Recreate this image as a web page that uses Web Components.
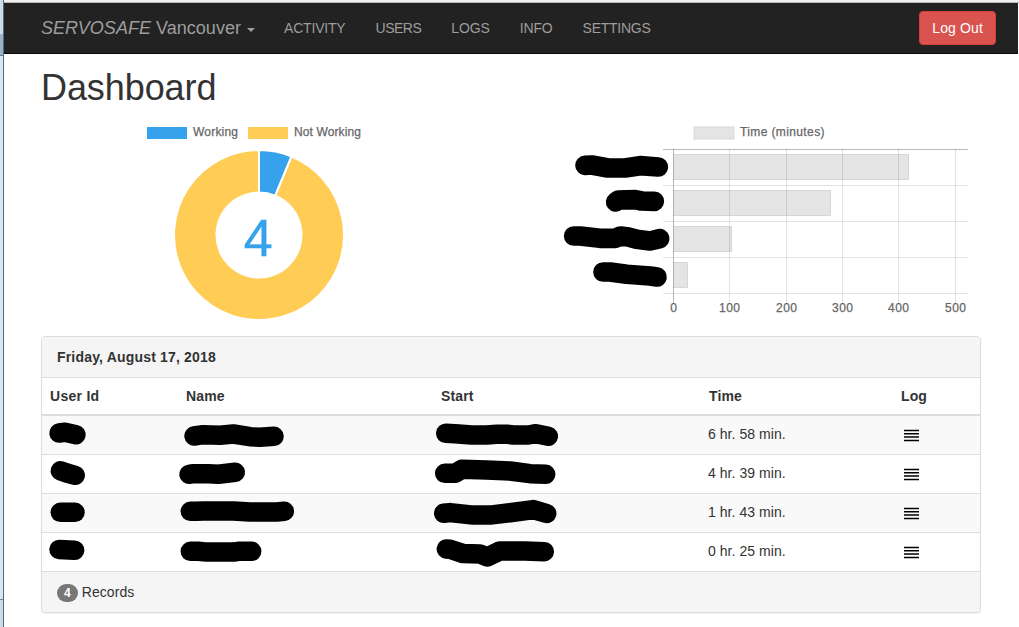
<!DOCTYPE html>
<html lang="en">
<head>
<meta charset="utf-8">
<title>Dashboard</title>
<style>
html,body{height:100%}
body{margin:0;background:#fff;color:#333;font:14px/20px "Liberation Sans",Arial,sans-serif;overflow:hidden}
</style>
</head>
<body>
<app-window>
  <nav-bar slot="nav">
    <nav-brand slot="brand"><i>SERVOSAFE</i> Vancouver</nav-brand>
    <nav-link style="letter-spacing:-.19px">ACTIVITY</nav-link><nav-link style="letter-spacing:-.5px">USERS</nav-link><nav-link style="letter-spacing:-.13px">LOGS</nav-link><nav-link style="letter-spacing:-.13px">INFO</nav-link><nav-link style="letter-spacing:-.25px">SETTINGS</nav-link>
    <danger-button slot="action">Log Out</danger-button>
  </nav-bar>
  <page-title>Dashboard</page-title>
  <chart-row><donut-chart></donut-chart><time-chart></time-chart></chart-row>
  <records-panel>
    <span slot="heading">Friday, August 17, 2018</span>
    <record-row head></record-row>
    <record-row time="6 hr. 58 min." a="17,17 23,16.3 34,18.7" b="16,20 25.3,18.7 42,19.3 55.3,18 72,20.7 82,21.3 96,20.3" c="12.7,17.3 22,17.7 38.7,19 53.7,19 63.7,18.3 75.3,18.3 80,19 95.3,19 103,17.7 115.3,20.3"></record-row>
    <record-row time="4 hr. 39 min." a="18.3,15.8 24.7,18 33.3,20.3" b="11,19.3 15.3,18.7 30.3,18.7 40.3,19.3 57.3,17.3" c="11.7,18.3 22,18.3 28.7,14.3 53.7,14.9 77,16 97,18.7 112.7,19.3"></record-row>
    <record-row time="1 hr. 43 min." a="18.3,18.3 33,18.3" b="12.3,17.3 18.7,17.3 25.3,16.9 55.3,16.9 72,18 98.7,18 106.3,17.3" c="10.7,19.3 17,18.6 40.3,21.1 57,21.1 77,18.7 100.3,15.6 113.7,19.5"></record-row>
    <record-row time="0 hr. 25 min." a="17,16.5 32.7,17.3" b="12.3,18.3 20.3,18.3 28.7,19.1 55.3,19.1 60.3,18.3 73.7,18.3" c="13.3,16 17,16.3 30.3,20.6 47,21 54.3,24 67,17.9 92,17.9 111.3,18.7"></record-row>
    <count-badge slot="footer">4</count-badge><span slot="footer">Records</span>
  </records-panel>
</app-window>
<script>
function define(name, html) {
  customElements.define(name, class extends HTMLElement {
    constructor() {
      super();
      this.attachShadow({mode: 'open'}).innerHTML = html;
    }
  });
}

define('app-window', `<style>
:host{display:grid;grid-template-columns:3px 1px 1014px 1px;grid-template-rows:3px 1fr;height:627px}
.edge{grid-row:1/3;background:linear-gradient(#d9d9d9 0 34px,#a4afbd 34px 55px,#74787e 55px 56px,#e3e3e3 56px 599px,#808080 599px 600px,#d8d8d8 600px)}
.line{grid-row:1/3;background:#2b74a6}
.top{grid-column:3/5;background:#f0f0f0;border-bottom:1px solid #b9b9b9;height:2px}
.body{grid-column:3;min-width:0}
.page{padding:14px 37px 0}
</style><div class="edge"></div><div class="line"></div><div class="top"></div>
<div class="body"><slot name="nav"></slot><div class="page"><slot></slot></div></div>`);

define('nav-bar', `<style>
:host{display:flex;align-items:center;height:50px;background:#222;border-bottom:1px solid #080808;color:#9d9d9d;padding:0 22px 0 37px}
.links{display:flex;flex:1;margin-left:14px}
</style><slot name="brand"></slot><div class="links"><slot></slot></div><slot name="action"></slot>`);

define('nav-brand', `<style>
:host{display:flex;align-items:center;font-size:18px;white-space:pre;letter-spacing:.03px}
.caret{border:4px solid transparent;border-top-color:currentColor;border-bottom:0;margin:3px 0 0 6px}
</style><span><slot></slot></span><span class="caret"></span>`);

define('nav-link', `<style>:host{display:block;padding:15px;line-height:20px}</style><slot></slot>`);

define('danger-button', `<style>
:host{display:block;box-sizing:border-box;height:34px;padding:6px 12px;border:1px solid #d43f3a;border-radius:4px;background:#d9534f;color:#fff;white-space:nowrap;letter-spacing:.13px}
</style><slot></slot>`);

define('page-title', `<style>:host{display:block;font-size:36px;line-height:39.6px;height:50px;letter-spacing:-.08px}</style><slot></slot>`);

define('chart-row', `<style>:host{display:grid;grid-template-columns:470px 470px;height:218px}</style><slot></slot>`);

const donutSlice = (a0, a1) => {
  const p = (r, a) => (259 + r * Math.sin(a)).toFixed(2) + ' ' + (235 - r * Math.cos(a)).toFixed(2);
  const big = a1 - a0 > Math.PI ? 1 : 0;
  return `M${p(85, a0)}A85 85 0 ${big} 1 ${p(85, a1)}L${p(42.5, a1)}A42.5 42.5 0 ${big} 0 ${p(42.5, a0)}Z`;
};
const chartStyle = `<style>:host{display:block}svg{display:block;overflow:visible}text{font-size:12px;fill:#666;stroke:#666;stroke-width:.25px}</style>`;

define('donut-chart', `${chartStyle}<svg width="470" height="218" viewBox="41 118 470 218">
<rect x="147" y="127" width="40" height="12" fill="#36a2eb"/><text x="193" y="136" textLength="45">Working</text>
<rect x="248" y="127" width="40" height="12" fill="#ffcd56"/><text x="294" y="136" textLength="67">Not Working</text>
<g stroke="#fff" stroke-width="2"><path fill="#36a2eb" d="${donutSlice(0, Math.PI / 8)}"/><path fill="#ffcd56" d="${donutSlice(Math.PI / 8, Math.PI * 2)}"/></g>
<text x="258.3" y="256" text-anchor="middle" style="font-size:52px;fill:#36a2eb;stroke:#36a2eb;stroke-width:.4px">4</text></svg>`);

const ticks = [[673.5, 0], [729.5, 100], [786.5, 200], [842.5, 300], [898.5, 400], [955.5, 500]];
const bars = [[154, 909], [190, 831], [226, 732], [262, 688]];
const nameMarks = [
  '585,165.3 591.7,165 608,168 625,168 640,165.7 658.3,167',
  '615.7,202 618.3,200 635,199.7 641.7,201 654.3,201.3',
  '573.7,236 580,236 600,238.3 615,238.3 620.7,236 628.3,237 636.7,239.3 650,241 659.7,238.7',
  '603,272 610,272 626.7,274.3 650,276 657,277'];
define('time-chart', `${chartStyle}<svg width="470" height="218" viewBox="511 118 470 218">
<rect x="694" y="127" width="40" height="12" fill="#e4e4e4" stroke="#d9d9d9"/><text x="740" y="136" textLength="84.5">Time (minutes)</text>
${bars.map(([y, x]) => `<path d="M673.5 ${y + .5}H${x - .5}V${y + 25.5}H673.5" fill="#e4e4e4" stroke="#d6d6d6"/>`).join('')}
<path d="${[185.5, 221.5, 257.5, 293.5].map(y => `M663 ${y}H968`).join('')}${ticks.slice(1).map(([x]) => `M${x} 149V303`).join('')}" stroke="#000" stroke-opacity=".11" fill="none"/>
<path d="M663 149.5H968M673.5 149V303" stroke="#000" stroke-opacity=".27" fill="none"/>
${ticks.map(([x, t]) => `<text x="${x}" y="312" text-anchor="middle" textLength="${t ? 21 : 7}">${t}</text>`).join('')}
<g fill="none" stroke="#000" stroke-width="19.7" stroke-linecap="round" stroke-linejoin="round">${nameMarks.map(p => `<polyline points="${p}"/>`).join('')}</g></svg>`);

define('records-panel', `<style>
:host{display:block;border:1px solid #ddd;border-radius:4px;background:#fff;box-shadow:0 1px 1px rgba(0,0,0,.05);overflow:hidden}
.head{box-sizing:border-box;height:41px;padding:10px 15px;background:#f5f5f5;border-bottom:1px solid #ddd;font-weight:bold;letter-spacing:.18px}
.foot{display:flex;align-items:center;box-sizing:border-box;height:41px;padding:0 15px;gap:4px;background:#f5f5f5;border-top:1px solid #ddd;letter-spacing:.07px}
</style><div class="head"><slot name="heading"></slot></div><slot></slot><div class="foot"><slot name="footer"></slot></div>`);

define('count-badge', `<style>
:host{display:block;box-sizing:border-box;min-width:20px;height:18px;padding:3px 7px;border-radius:10px;background:#777;color:#fff;font-size:12px;font-weight:bold;line-height:12px;text-align:center;margin-top:1px}
</style><slot></slot>`);

define('redaction-mark', `<style>:host{display:block;height:38px}svg{display:block;overflow:visible}</style>
<svg width="130" height="38"><polyline fill="none" stroke="#000" stroke-width="19.5" stroke-linecap="round" stroke-linejoin="round"/></svg>`);

define('log-icon', `<style>:host{display:block;margin-left:11px}svg{display:block}</style>
<svg width="15" height="38"><path d="M0 14.4H15M0 17.7H15M0 21.1H15M0 24.4H15" stroke="#000" stroke-width="1.5"/></svg>`);

customElements.define('record-row', class extends HTMLElement {
  connectedCallback() {
    const root = this.attachShadow({mode: 'open'});
    const head = this.hasAttribute('head');
    root.innerHTML = `<style>
:host{display:grid;grid-template-columns:136px 255px 268px 192px 87px;height:38px;border-top:1px solid #ddd;letter-spacing:.05px}
:host([head]){height:36px;border-top:0;border-bottom:1px solid #ddd;font-weight:bold;letter-spacing:.12px}
:host(:nth-of-type(even)){background:#f9f9f9}
.text{padding:8px 7px}
:host([head]) .text{padding:8px}
:host([head]) .text:first-of-type{letter-spacing:.28px}
</style>` + (head
      ? ['User Id', 'Name', 'Start', 'Time', 'Log'].map(t => `<div class="text">${t}</div>`).join('')
      : `<redaction-mark></redaction-mark><redaction-mark></redaction-mark><redaction-mark></redaction-mark><div class="text">${this.getAttribute('time')}</div><log-icon></log-icon>`);
    root.querySelectorAll('redaction-mark').forEach((m, i) =>
      m.shadowRoot.querySelector('polyline').setAttribute('points', this.getAttribute('abc'[i])));
  }
});
</script>
</body>
</html>
